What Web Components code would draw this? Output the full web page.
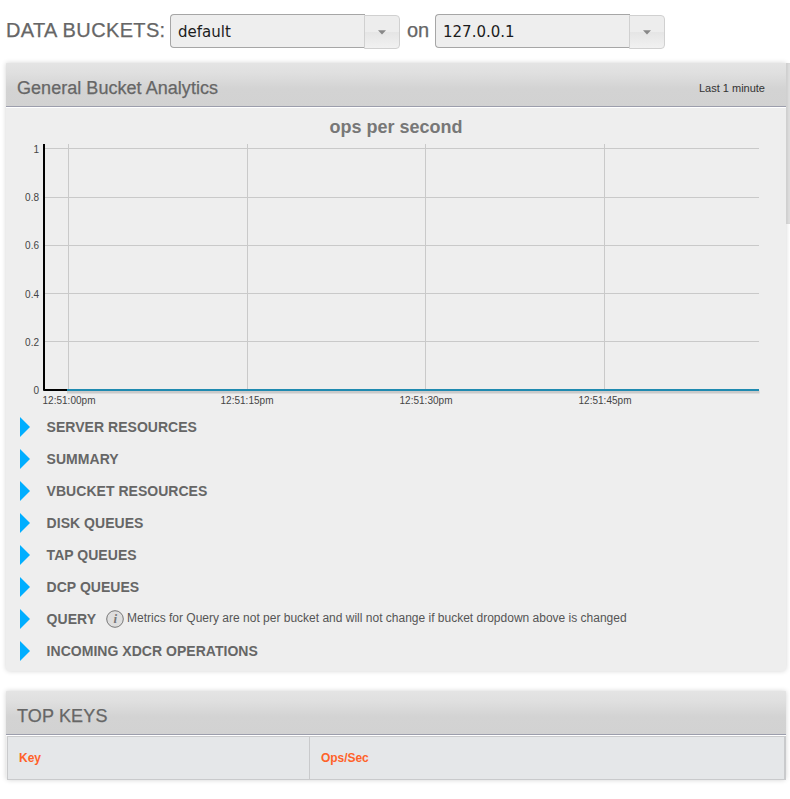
<!DOCTYPE html>
<html lang="en"><head><meta charset="utf-8"><title>Data Buckets</title>
<style>body{margin:0;background:#fff;font-family:"Liberation Sans",Arial,sans-serif;color:#666}</style></head>
<body><bucket-monitor></bucket-monitor>
<script>
const define = (name, html, setup) => customElements.define(name, class extends HTMLElement {
  constructor() {
    super();
    this.attachShadow({mode: 'open'});
  }
  connectedCallback() {
    const t = document.createElement('template');
    t.innerHTML = html;
    this.shadowRoot.replaceChildren(t.content.cloneNode(true));
    if (setup) setup(this, this.shadowRoot);
  }
});

define('combo-box', `<style>
:host{display:flex;width:230px;height:35px;align-items:flex-start}
.value{box-sizing:border-box;width:195px;height:34px;border:1px solid #a6a6a6;border-right:0;border-radius:4px 0 0 4px;background:#eee;color:#1c1c1c;font:15px/33px "DejaVu Sans",sans-serif;padding-left:7px;padding-top:1px}
button{box-sizing:border-box;width:36px;height:34px;margin:1px 0 0 -1px;padding:0;border:1px solid #d0d0d0;border-radius:0 4px 4px 0;background:linear-gradient(#ededed 0 50%,#e5e5e5 50%,#f1f1f1);display:flex;align-items:center;justify-content:center}
svg{display:block}
</style><div class="value"><slot></slot></div><button><svg width="8" height="5"><path d="M0 0.2H8L4 4.5Z" fill="#888"/></svg></button>`);

define('panel-box', `<style>
:host{display:block;width:780px;background:#eee;border-radius:1px 1px 4px 4px;box-shadow:0 0 5px rgba(0,0,0,.18);position:relative}
header{box-sizing:border-box;height:44px;display:flex;justify-content:space-between;align-items:center;padding:7px 21px 0 11px;border-bottom:1px solid #9c9eac;background:linear-gradient(#e4e4e4 0,#e0e0e0 22%,#d3d3d3 60%,#d2d2d2);font-size:18px;line-height:22px;border-radius:1px 1px 0 0}
.body{border-top:1px solid #fff}
.title{-webkit-text-stroke:.25px #666;letter-spacing:var(--title-spacing,.04px)}
</style><header><span class="title"><slot name="title"></slot></span><slot name="aside"></slot></header><div class="body"><slot></slot></div>`);

define('ops-chart', `<style>
:host{display:block;height:303px}
svg{display:block}
.tick{font-size:10px;fill:#444}
.title{font-size:18px;font-weight:bold;fill:#777}
</style><svg width="780" height="303" viewBox="6 108 780 303" font-family="Liberation Sans,Arial,sans-serif">
<text class="title" x="396" y="133" text-anchor="middle" textLength="133">ops per second</text>
<g id="grid" fill="#c9c9c9"></g>
<path d="M44 144V390H68" fill="none" stroke="#000" stroke-width="2" stroke-linejoin="round"/>
<path d="M67 392H759.5" stroke="#000" stroke-opacity=".15" stroke-width="3"/>
<path d="M67 390H759" stroke="#1f8ab0" stroke-width="2"/>
</svg>`, (host, root) => {
  const rows = [[148,'1',153],[197,'0.8',201],[245,'0.6',249],[293,'0.4',298],[341,'0.2',346],[null,'0',394]];
  const cols = [[68,'00',69],[247,'15',247],[425,'30',426],[604,'45',605]];
  root.querySelector('#grid').innerHTML =
    rows.map(([y,l,b]) => (y ? `<rect x="45" y="${y}" width="714" height="1"/>` : '') + `<text class="tick" x="39" y="${b}" text-anchor="end">${l}</text>`).join('') +
    cols.map(([x,s,c]) => `<rect x="${x}" y="144" width="1" height="246"/><text class="tick" x="${c}" y="404" text-anchor="middle" textLength="53">12:51:${s}pm</text>`).join('');
});

define('stat-section', `<style>
:host{display:flex;height:32px;align-items:center;padding-left:14px;font-size:14px;font-weight:bold;letter-spacing:.03px}
.arrow{width:10px;height:20px;background:#00aeff;clip-path:polygon(0 0,100% 50%,0 100%);margin-right:16.6px}
</style><span class="arrow"></span><slot></slot>`);

define('info-note', `<style>
:host{display:flex;align-items:center;margin-left:10px;font-size:12px;font-weight:normal;letter-spacing:0;color:#555;gap:3px}
.text{padding-bottom:2px;white-space:nowrap}
</style><svg width="18" height="18"><circle cx="9" cy="9" r="8.3" fill="#dedede" stroke="#777"/><text x="9.2" y="12.6" text-anchor="middle" font-family="Liberation Serif,serif" font-style="italic" font-weight="bold" font-size="13" fill="#777">i</text></svg><span class="text"><slot></slot></span>`);

define('key-table', `<style>
:host{display:grid;grid-template-columns:302px 1fr;box-sizing:border-box;height:44px;border:1px solid #c9cacc;border-right-width:2px;margin-left:1px;background:#e5e7e9;color:#ff6229;font-size:12px;font-weight:bold}
div{display:flex;align-items:center;padding-left:11px}
.key{border-right:1px solid #c9cacc}
.ops{letter-spacing:-.05px}
</style><div class="key"><slot name="key"></slot></div><div class="ops"><slot name="ops"></slot></div>`);

define('bucket-monitor', `<style>
:host{display:flex;flex-direction:column;height:799px;overflow:hidden}
nav{display:flex;height:49px;padding:14px 0 0 6px;box-sizing:border-box;font-size:20px;line-height:32px;-webkit-text-stroke:.25px #666}
combo-box{-webkit-text-stroke:0;letter-spacing:0}
.label{width:164px;white-space:nowrap;letter-spacing:.36px}.on{width:35px;padding-left:7px;box-sizing:border-box}
main{display:flex;align-items:flex-start;margin:14px 0 0 6px}
#analytics{height:608px}
.rail{width:4px;height:161px;background:#ddd;box-shadow:inset 2px 0 2px rgba(0,0,0,.06);position:relative}
.range{font-size:11px;color:#333}
#keys{margin:20px 0 0 6px;--title-spacing:.15px}
</style>
<nav><span class="label">DATA BUCKETS:</span><combo-box>default</combo-box><span class="on">on</span><combo-box>127.0.0.1</combo-box></nav>
<main><panel-box id="analytics"><span slot="title">General Bucket Analytics</span><span class="range" slot="aside">Last 1 minute</span>
<ops-chart></ops-chart>
<stat-section>SERVER RESOURCES</stat-section><stat-section>SUMMARY</stat-section><stat-section>VBUCKET RESOURCES</stat-section><stat-section>DISK QUEUES</stat-section><stat-section>TAP QUEUES</stat-section><stat-section>DCP QUEUES</stat-section>
<stat-section>QUERY<info-note>Metrics for Query are not per bucket and will not change if bucket dropdown above is changed</info-note></stat-section>
<stat-section>INCOMING XDCR OPERATIONS</stat-section></panel-box><div class="rail"></div></main>
<panel-box id="keys"><span slot="title">TOP KEYS</span><key-table><span slot="key">Key</span><span slot="ops">Ops/Sec</span></key-table></panel-box>`);
</script></body></html>
